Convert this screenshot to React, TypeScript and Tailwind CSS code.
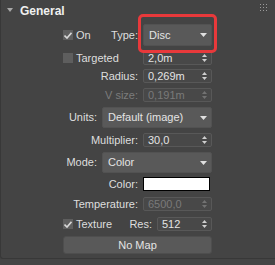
import type { ReactNode } from "react";

const FONT = "font-['Liberation_Sans',Arial,sans-serif]";

export default function App() {
  return (
    <div className={`relative h-[265px] w-[275px] bg-[#444444] text-[11px] text-[#dedede] ${FONT}`}>
      <div className="absolute bottom-[6px] left-0 right-0 top-0 rounded-bl-[3px] border-b border-l border-[#383838]" />

      <Header />

      <div className="relative flex flex-col">
        {/* On / Type */}
        <div className="mt-[2px] flex h-[22px] items-center">
          <div className="flex w-[140px] shrink-0 items-center">
            <Check checked label="On" />
            <Label>Type:</Label>
          </div>
          <Dropdown value="Disc" w="w-[69px]" />
        </div>

        {/* Targeted */}
        <div className="mt-[5px] flex h-[14px] items-center">
          <div className="flex w-[140px] shrink-0 items-center">
            <Check label="Targeted" />
          </div>
          <Spinner value="2,0m" w="w-[69px]" />
        </div>

        <div className="mt-[4px] flex h-[14px] items-center">
          <Label w="w-[140px]">Radius:</Label>
          <Spinner value="0,269m" w="w-[69px]" />
        </div>

        <div className="mt-[5px] flex h-[14px] items-center">
          <Label w="w-[140px]" disabled>
            V size:
          </Label>
          <Spinner value="0,191m" w="w-[69px]" disabled />
        </div>

        <div className="mt-[5px] flex h-[21px] items-center">
          <Label w="w-[99px]">Units:</Label>
          <Dropdown value="Default (image)" w="w-[110px]" />
        </div>

        <div className="mt-[5px] flex h-[14px] items-center">
          <Label w="w-[140px]">Multiplier:</Label>
          <Spinner value="30,0" w="w-[69px]" />
        </div>

        <div className="mt-[5px] flex h-[21px] items-center">
          <Label w="w-[99px]">Mode:</Label>
          <Dropdown value="Color" w="w-[110px]" />
        </div>

        <div className="mt-[4px] flex h-[14px] items-center">
          <Label w="w-[140px]">Color:</Label>
          <div className="ml-[3px] h-[14px] w-[67px] border border-black bg-white" />
        </div>

        <div className="mt-[6px] flex h-[14px] items-center">
          <Label w="w-[140px]">Temperature:</Label>
          <Spinner value="6500,0" w="w-[69px]" disabled />
        </div>

        <div className="mt-[6px] flex h-[14px] items-center">
          <div className="flex w-[154px] shrink-0 items-center">
            <Check checked label="Texture" />
            <Label>Res:</Label>
          </div>
          <Spinner value="512" w="w-[55px]" />
        </div>

        <div className="ml-[63px] mt-[5px] flex h-[18px] w-[149px] items-center justify-center rounded-[3px] border border-[#4e4e4e] bg-[#595959] text-[#e4e4e4]">
          No Map
        </div>
      </div>

      {/* highlight around Type dropdown */}
      <div className="absolute left-[138px] top-[14px] h-[39px] w-[79px] rounded-[5px] border-[3px] border-[#e8393b]" />
    </div>
  );
}

function Header() {
  return (
    <div className="relative flex h-[22px] items-center">
      <svg width="6" height="4" viewBox="0 0 6 4" className="ml-[7px] mt-[-2px]">
        <path d="M0 0 H6 L3 4 Z" fill="#a8a8a8" />
      </svg>
      <span className="ml-[7px] text-[12px] font-bold text-[#f0f0f0]">General</span>
      <svg width="7" height="7" viewBox="0 0 7 7" className="ml-auto mr-[8px] mt-[-8px]">
        {[0, 3, 6].map((y) =>
          [0, 3, 6].map((x) => <rect key={`${x}-${y}`} x={x} y={y} width="1" height="1" fill="#9a9a9a" />)
        )}
      </svg>
    </div>
  );
}

function Check({ checked, label }: { checked?: boolean; label: string }) {
  return (
    <div className="ml-[63px] flex items-center">
      <span className="flex h-[10px] w-[10px] items-center justify-center bg-[#5e5e5e]">
        {checked ? (
          <svg width="8" height="7" viewBox="0 0 8 7">
            <path d="M0.5 3.5 L3 6 L7.5 0.8" stroke="#d8d8d8" strokeWidth="1.6" fill="none" />
          </svg>
        ) : null}
      </span>
      <span className="ml-[3px]">{label}</span>
    </div>
  );
}

function Label({ w, disabled, children }: { w?: string; disabled?: boolean; children: ReactNode }) {
  return (
    <div className={`${w ?? "ml-auto"} shrink-0 pr-[2px] text-right ${disabled ? "text-[#7c7c7c]" : ""}`}>
      {children}
    </div>
  );
}

function Dropdown({ value, w }: { value: string; w: string }) {
  return (
    <div className={`ml-[3px] flex h-full ${w} items-center rounded-[2px] border border-[#525252] bg-[#595959] pl-[5px] pr-[3px]`}>
      <span className="text-[#e4e4e4]">{value}</span>
      <svg width="7" height="4" viewBox="0 0 7 4" className="ml-auto mr-[1px]">
        <path d="M0 0 H7 L3.5 4 Z" fill="#e0e0e0" />
      </svg>
    </div>
  );
}

function Spinner({ value, w, disabled }: { value: string; w: string; disabled?: boolean }) {
  const c = disabled ? "#727272" : "#cfcfcf";
  return (
    <div className={`ml-[3px] flex h-full ${w} items-center rounded-[2px] border border-[#585858] bg-[#484848] pl-[4px] pr-[3px]`}>
      <span className={disabled ? "text-[#7a7a7a]" : "text-[#e4e4e4]"}>{value}</span>
      <svg width="5" height="8" viewBox="0 0 5 8" className="ml-auto mr-[1px]">
        <path d="M0 3 L2.5 0 L5 3 Z" fill={c} />
        <path d="M0 5 L2.5 8 L5 5 Z" fill={c} />
      </svg>
    </div>
  );
}
